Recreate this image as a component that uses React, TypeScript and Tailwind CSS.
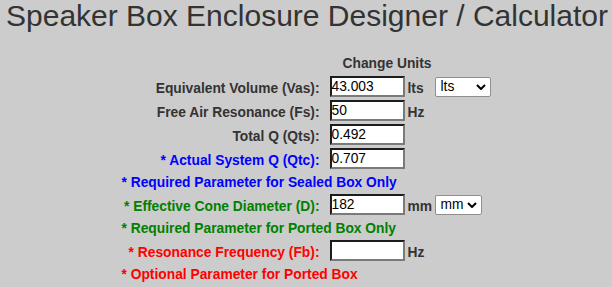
import React from 'react';

type Field = {
  kind: 'field';
  label: string;
  value: string;
  unit: string;
  color: string;
  select?: { value: string; width: string };
};

type Note = { kind: 'note'; text: string; color: string };

const rows: (Field | Note)[] = [
  { kind: 'field', label: 'Equivalent Volume (Vas):', value: '43.003', unit: 'lts', color: 'text-[#333333]', select: { value: 'lts', width: 'w-[56px]' } },
  { kind: 'field', label: 'Free Air Resonance (Fs):', value: '50', unit: 'Hz', color: 'text-[#333333]' },
  { kind: 'field', label: 'Total Q (Qts):', value: '0.492', unit: '', color: 'text-[#333333]' },
  { kind: 'field', label: '* Actual System Q (Qtc):', value: '0.707', unit: '', color: 'text-[#0000ff]' },
  { kind: 'note', text: '* Required Parameter for Sealed Box Only', color: 'text-[#0000ff]' },
  { kind: 'field', label: '* Effective Cone Diameter (D):', value: '182', unit: 'mm', color: 'text-[#008000]', select: { value: 'mm', width: 'w-[47px]' } },
  { kind: 'note', text: '* Required Parameter for Ported Box Only', color: 'text-[#008000]' },
  { kind: 'field', label: '* Resonance Frequency (Fb):', value: '', unit: 'Hz', color: 'text-[#ff0000]' },
  { kind: 'note', text: '* Optional Parameter for Ported Box', color: 'text-[#ff0000]' },
];

const UnitSelect = ({ value, width }: { value: string; width: string }) => (
  <div className={`relative mt-[1px] h-[20px] ${width} bg-white border border-[#8f8f8f] rounded-[2px] text-[13.8px] leading-[18px] text-black pl-[5px]`}>
    {value}
    <svg className="absolute right-[4px] top-[6px]" width="10" height="6" viewBox="0 0 10 6">
      <polyline points="1,1 5,5 9,1" fill="none" stroke="#000" strokeWidth="2" />
    </svg>
  </div>
);

const FieldRow = ({ row }: { row: Field }) => (
  <div className="flex h-[24px] items-start">
    <div className={`w-[198px] text-right font-bold leading-[21px] pt-[2px] ${row.color}`}>{row.label}</div>
    <input
      readOnly
      value={row.value}
      className="ml-[10px] w-[75px] h-[21px] bg-white border-2 border-t-[#1c1c1c] border-l-[#1c1c1c] border-r-[#7a7a7a] border-b-[#7a7a7a] px-0 text-[13.8px] leading-[17px] text-black outline-none"
    />
    <div className="ml-[3px] w-[25px] font-bold leading-[21px] pt-[2px] text-[#333333]">{row.unit}</div>
    {row.select && (
      <div className="ml-[2px]">
        <UnitSelect value={row.select.value} width={row.select.width} />
      </div>
    )}
  </div>
);

export default function App() {
  return (
    <div className="w-[612px] h-[287px] bg-[#cccccc] overflow-hidden font-['Liberation_Sans',Arial,sans-serif]">
      <h1 className="pt-[1px] pl-[6px] text-[30px] leading-[30px] font-normal text-[#333333] whitespace-nowrap">
        Speaker Box Enclosure Designer / Calculator
      </h1>
      <div className="mx-auto mt-[25px] w-[369px] text-[13.8px]">
        <div className="flex h-[20px]">
          <div className="w-[208px]" />
          <div className="pl-[13px] font-bold leading-[16px] text-[#333333]">Change Units</div>
        </div>
        {rows.map((row, i) =>
          row.kind === 'field' ? (
            <FieldRow key={i} row={row} />
          ) : (
            <div key={i} className={`h-[22px] leading-[22px] font-bold whitespace-nowrap ${row.color}`}>
              {row.text}
            </div>
          )
        )}
      </div>
    </div>
  );
}
